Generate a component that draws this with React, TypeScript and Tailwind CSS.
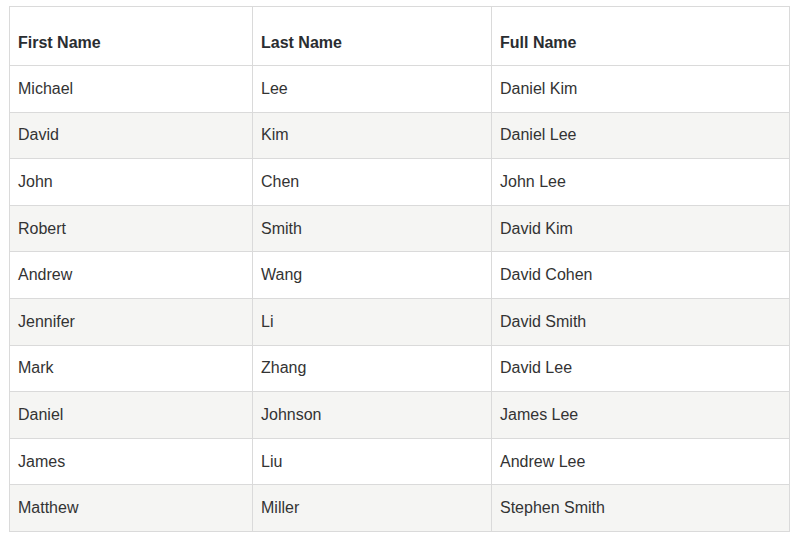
const rows = [
  ["Michael", "Lee", "Daniel Kim"],
  ["David", "Kim", "Daniel Lee"],
  ["John", "Chen", "John Lee"],
  ["Robert", "Smith", "David Kim"],
  ["Andrew", "Wang", "David Cohen"],
  ["Jennifer", "Li", "David Smith"],
  ["Mark", "Zhang", "David Lee"],
  ["Daniel", "Johnson", "James Lee"],
  ["James", "Liu", "Andrew Lee"],
  ["Matthew", "Miller", "Stephen Smith"],
];

export default function App() {
  return (
    <div className="bg-white w-[800px] h-[542px] pt-[6px] pl-[9px]" style={{ fontFamily: '"Liberation Sans", Arial, sans-serif' }}>
      <table className="border-collapse table-fixed w-[780px] text-[16px] text-[#333]">
        <colgroup>
          <col className="w-[243px]" />
          <col className="w-[239px]" />
          <col className="w-[298px]" />
        </colgroup>
        <thead>
          <tr className="h-[59px]">
            {["First Name", "Last Name", "Full Name"].map(h => (
              <th key={h} className="border border-[#dadada] px-2 pb-[10px] align-bottom text-left font-bold text-[#2a2d31] leading-6">
                {h}
              </th>
            ))}
          </tr>
        </thead>
        <tbody>
          {rows.map((r, i) => (
            <tr key={i} className={i % 2 === 1 ? "h-[46.6px] bg-[#f5f5f3]" : "h-[46.6px] bg-white"}>
              {r.map((c, j) => (
                <td key={j} className="border border-[#dadada] px-2 align-middle leading-6">
                  {c}
                </td>
              ))}
            </tr>
          ))}
        </tbody>
      </table>
    </div>
  );
}
